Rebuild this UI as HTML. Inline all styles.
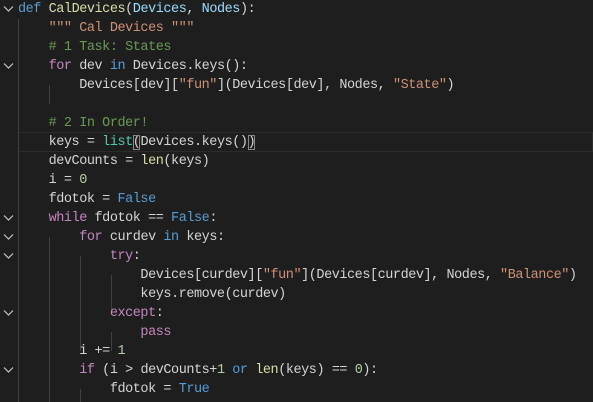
<!DOCTYPE html>
<html><head><meta charset="utf-8"><style>
html,body{margin:0;padding:0;background:#1e1e1e;width:593px;height:402px;overflow:hidden}
.l{position:absolute;left:18px;height:19px;line-height:19px;font-family:"Liberation Mono",monospace;font-size:13.5px;letter-spacing:-0.45px;color:#d4d4d4;white-space:pre}
.k{color:#569cd6}.f{color:#dcdcaa}.p{color:#9cdcfe}.s{color:#ce9178}.c{color:#6a9955}.m{color:#c586c0}.n{color:#b5cea8}.t{color:#4ec9b0}
.g{position:absolute;width:1px;background:#404040}
.ch{position:absolute;left:3px;width:11px;height:8px}
.hl{position:absolute;left:18px;right:0;top:132px;height:18px;border:1px solid #2c2c2c;border-left:none}
.b{outline:1px solid #888;outline-offset:-1px}
</style></head><body>
<div class="hl"></div>
<div class="g" style="left:18px;top:19px;height:383px"></div>
<div class="g" style="left:49px;top:85px;height:19px"></div>
<div class="g" style="left:49px;top:237px;height:165px"></div>
<div class="g" style="left:80px;top:256px;height:95px"></div>
<div class="g" style="left:80px;top:389px;height:13px"></div>
<div class="g" style="left:111px;top:275px;height:38px"></div>
<div class="g" style="left:111px;top:332px;height:19px"></div>
<svg class="ch" style="top:5px" viewBox="0 0 11 8"><path d="M1 1.5L5.5 6L10 1.5" fill="none" stroke="#c5c5c5" stroke-width="1.2"/></svg>
<svg class="ch" style="top:62px" viewBox="0 0 11 8"><path d="M1 1.5L5.5 6L10 1.5" fill="none" stroke="#c5c5c5" stroke-width="1.2"/></svg>
<svg class="ch" style="top:214px" viewBox="0 0 11 8"><path d="M1 1.5L5.5 6L10 1.5" fill="none" stroke="#c5c5c5" stroke-width="1.2"/></svg>
<svg class="ch" style="top:233px" viewBox="0 0 11 8"><path d="M1 1.5L5.5 6L10 1.5" fill="none" stroke="#c5c5c5" stroke-width="1.2"/></svg>
<svg class="ch" style="top:252px" viewBox="0 0 11 8"><path d="M1 1.5L5.5 6L10 1.5" fill="none" stroke="#c5c5c5" stroke-width="1.2"/></svg>
<svg class="ch" style="top:309px" viewBox="0 0 11 8"><path d="M1 1.5L5.5 6L10 1.5" fill="none" stroke="#c5c5c5" stroke-width="1.2"/></svg>
<svg class="ch" style="top:366px" viewBox="0 0 11 8"><path d="M1 1.5L5.5 6L10 1.5" fill="none" stroke="#c5c5c5" stroke-width="1.2"/></svg>

<div class="l" style="top:0"><span class="k">def</span> <span class="f">CalDevices</span>(<span class="p">Devices</span>, <span class="p">Nodes</span>):</div>
<div class="l" style="top:19px">    <span class="s">""" Cal Devices """</span></div>
<div class="l" style="top:38px">    <span class="c"># 1 Task: States</span></div>
<div class="l" style="top:57px">    <span class="m">for</span> dev <span class="k">in</span> Devices.keys():</div>
<div class="l" style="top:76px">        Devices[dev][<span class="s">"fun"</span>](Devices[dev], Nodes, <span class="s">"State"</span>)</div>
<div class="l" style="top:114px">    <span class="c"># 2 In Order!</span></div>
<div class="l" style="top:133px">    keys = <span class="t">list</span><span class="b">(</span>Devices.keys()<span class="b">)</span></div>
<div class="l" style="top:152px">    devCounts = <span class="f">len</span>(keys)</div>
<div class="l" style="top:171px">    i = <span class="n">0</span></div>
<div class="l" style="top:190px">    fdotok = <span class="k">False</span></div>
<div class="l" style="top:209px">    <span class="m">while</span> fdotok == <span class="k">False</span>:</div>
<div class="l" style="top:228px">        <span class="m">for</span> curdev <span class="k">in</span> keys:</div>
<div class="l" style="top:247px">            <span class="m">try</span>:</div>
<div class="l" style="top:266px">                Devices[curdev][<span class="s">"fun"</span>](Devices[curdev], Nodes, <span class="s">"Balance"</span>)</div>
<div class="l" style="top:285px">                keys.remove(curdev)</div>
<div class="l" style="top:304px">            <span class="m">except</span>:</div>
<div class="l" style="top:323px">                <span class="m">pass</span></div>
<div class="l" style="top:342px">        i += <span class="n">1</span></div>
<div class="l" style="top:361px">        <span class="m">if</span> (i &gt; devCounts+<span class="n">1</span> <span class="k">or</span> <span class="f">len</span>(keys) == <span class="n">0</span>):</div>
<div class="l" style="top:380px">            fdotok = <span class="k">True</span></div>
</body></html>
